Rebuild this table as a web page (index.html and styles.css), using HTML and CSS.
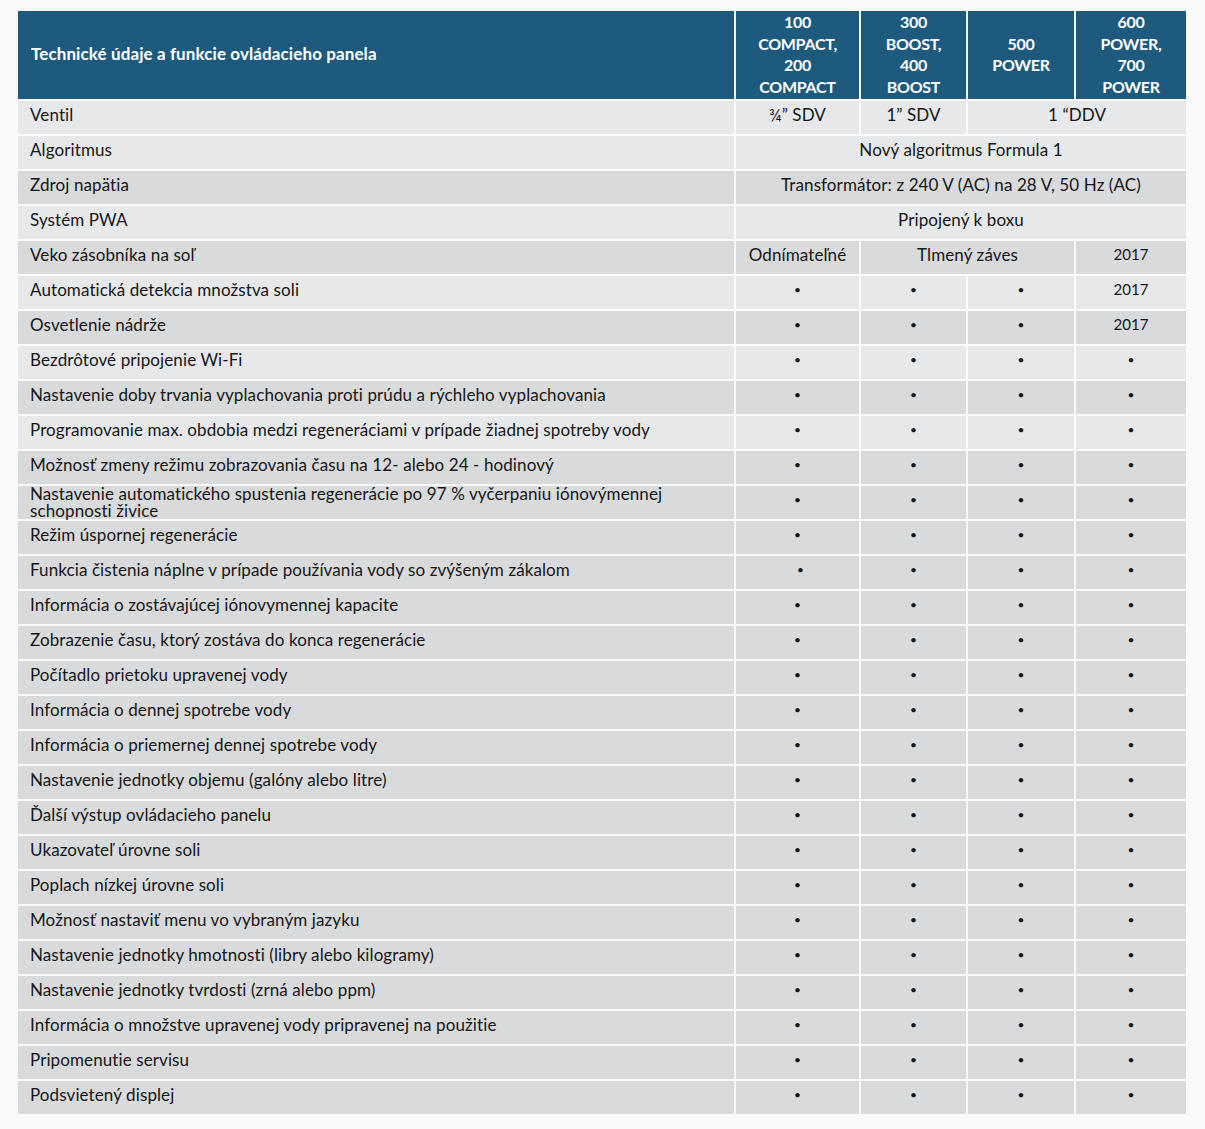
FILE: index.html
```html
<!DOCTYPE html>
<html lang="sk">
<head>
<meta charset="utf-8">
<title>Technické údaje</title>
<link rel="stylesheet" href="styles.css">
</head>
<body>
<table class="spec">
  <colgroup>
    <col class="c-name"><col class="c-a"><col class="c-b"><col class="c-c"><col class="c-d">
  </colgroup>
  <thead>
    <tr>
      <th class="h-title">Technické údaje a funkcie ovládacieho panela</th>
      <th>100<br>COMPACT,<br>200<br>COMPACT</th>
      <th>300<br>BOOST,<br>400<br>BOOST</th>
      <th>500<br>POWER</th>
      <th>600<br>POWER,<br>700<br>POWER</th>
    </tr>
  </thead>
  <tbody>
    <tr class="light"><td>Ventil</td><td>¾” SDV</td><td>1” SDV</td><td colspan="2">1 “DDV</td></tr>
    <tr class="light"><td>Algoritmus</td><td colspan="4">Nový algoritmus Formula 1</td></tr>
    <tr><td>Zdroj napätia</td><td colspan="4">Transformátor: z 240 V (AC) na 28 V, 50 Hz (AC)</td></tr>
    <tr class="light"><td>Systém PWA</td><td colspan="4">Pripojený k boxu</td></tr>
    <tr><td>Veko zásobníka na soľ</td><td>Odnímateľné</td><td colspan="2">Tlmený záves</td><td class="yr">2017</td></tr>
    <tr class="light"><td>Automatická detekcia množstva soli</td><td class="dot">•</td><td class="dot">•</td><td class="dot">•</td><td class="yr">2017</td></tr>
    <tr><td>Osvetlenie nádrže</td><td class="dot">•</td><td class="dot">•</td><td class="dot">•</td><td class="yr">2017</td></tr>
    <tr class="light"><td>Bezdrôtové pripojenie Wi-Fi</td><td class="dot">•</td><td class="dot">•</td><td class="dot">•</td><td class="dot">•</td></tr>
    <tr><td>Nastavenie doby trvania vyplachovania proti prúdu a rýchleho vyplachovania</td><td class="dot">•</td><td class="dot">•</td><td class="dot">•</td><td class="dot">•</td></tr>
    <tr class="light"><td>Programovanie max. obdobia medzi regeneráciami v prípade žiadnej spotreby vody</td><td class="dot">•</td><td class="dot">•</td><td class="dot">•</td><td class="dot">•</td></tr>
    <tr><td>Možnosť zmeny režimu zobrazovania času na 12- alebo 24 - hodinový</td><td class="dot">•</td><td class="dot">•</td><td class="dot">•</td><td class="dot">•</td></tr>
    <tr><td class="two">Nastavenie automatického spustenia regenerácie po 97 % vyčerpaniu iónovýmennej<br>schopnosti živice</td><td class="dot">•</td><td class="dot">•</td><td class="dot">•</td><td class="dot">•</td></tr>
    <tr><td>Režim úspornej regenerácie</td><td class="dot">•</td><td class="dot">•</td><td class="dot">•</td><td class="dot">•</td></tr>
    <tr><td>Funkcia čistenia náplne v prípade používania vody so zvýšeným zákalom</td><td class="dot dot-shift">•</td><td class="dot">•</td><td class="dot">•</td><td class="dot">•</td></tr>
    <tr><td>Informácia o zostávajúcej iónovymennej kapacite</td><td class="dot">•</td><td class="dot">•</td><td class="dot">•</td><td class="dot">•</td></tr>
    <tr><td>Zobrazenie času, ktorý zostáva do konca regenerácie</td><td class="dot">•</td><td class="dot">•</td><td class="dot">•</td><td class="dot">•</td></tr>
    <tr><td>Počítadlo prietoku upravenej vody</td><td class="dot">•</td><td class="dot">•</td><td class="dot">•</td><td class="dot">•</td></tr>
    <tr><td>Informácia o dennej spotrebe vody</td><td class="dot">•</td><td class="dot">•</td><td class="dot">•</td><td class="dot">•</td></tr>
    <tr><td>Informácia o priemernej dennej spotrebe vody</td><td class="dot">•</td><td class="dot">•</td><td class="dot">•</td><td class="dot">•</td></tr>
    <tr><td>Nastavenie jednotky objemu (galóny alebo litre)</td><td class="dot">•</td><td class="dot">•</td><td class="dot">•</td><td class="dot">•</td></tr>
    <tr><td>Ďalší výstup ovládacieho panelu</td><td class="dot">•</td><td class="dot">•</td><td class="dot">•</td><td class="dot">•</td></tr>
    <tr><td>Ukazovateľ úrovne soli</td><td class="dot">•</td><td class="dot">•</td><td class="dot">•</td><td class="dot">•</td></tr>
    <tr><td>Poplach nízkej úrovne soli</td><td class="dot">•</td><td class="dot">•</td><td class="dot">•</td><td class="dot">•</td></tr>
    <tr><td>Možnosť nastaviť menu vo vybraným jazyku</td><td class="dot">•</td><td class="dot">•</td><td class="dot">•</td><td class="dot">•</td></tr>
    <tr><td>Nastavenie jednotky hmotnosti (libry alebo kilogramy)</td><td class="dot">•</td><td class="dot">•</td><td class="dot">•</td><td class="dot">•</td></tr>
    <tr><td>Nastavenie jednotky tvrdosti (zrná alebo ppm)</td><td class="dot">•</td><td class="dot">•</td><td class="dot">•</td><td class="dot">•</td></tr>
    <tr><td>Informácia o množstve upravenej vody pripravenej na použitie</td><td class="dot">•</td><td class="dot">•</td><td class="dot">•</td><td class="dot">•</td></tr>
    <tr><td>Pripomenutie servisu</td><td class="dot">•</td><td class="dot">•</td><td class="dot">•</td><td class="dot">•</td></tr>
    <tr><td>Podsvietený displej</td><td class="dot">•</td><td class="dot">•</td><td class="dot">•</td><td class="dot">•</td></tr>
  </tbody>
</table>
</body>
</html>
```
FILE: styles.css
```css
html, body {
  background: #fafafa;
}
body {
  margin: 8px;
  font-family: Lato, "Noto Sans", sans-serif;
  color: #161616;
}
.spec {
  border-collapse: separate;
  border-spacing: 2px;
  table-layout: fixed;
  width: 1172px;
  margin: 1px 0 0 8px;
}
.c-name { width: 716px; }
.c-a { width: 123px; }
.c-b { width: 105px; }
.c-c { width: 106px; }
.c-d { width: 110px; }

.spec th {
  background: #1e5a7d;
  color: #ffffff;
  font-weight: 700;
  font-size: 16px;
  line-height: 21.5px;
  height: 86px;
  padding: 0 0 2px;
  text-align: center;
  vertical-align: middle;
  letter-spacing: -0.3px;
}
.spec th.h-title {
  text-align: left;
  padding-left: 13px;
  font-size: 17px;
  letter-spacing: 0.1px;
}
.spec td {
  background: #d9dadc;
  height: 27px;
  padding: 0 12px 6px;
  font-size: 17px;
  line-height: 17px;
  letter-spacing: 0.1px;
  vertical-align: middle;
  text-align: center;
  white-space: nowrap;
  overflow: hidden;
}
.spec tr.light td {
  background: #e7e8ea;
}
.spec td:first-child {
  text-align: left;
}
.spec td.two {
  line-height: 16.5px;
  height: 33px;
  padding-bottom: 0;
  overflow: visible;
}
.spec td.dot {
  font-size: 12px;
  padding: 0 0 6px;
}
.spec td.dot-shift {
  padding-left: 6px;
}
.spec td.yr {
  font-size: 15px;
  padding: 0 0 6px;
}
```
